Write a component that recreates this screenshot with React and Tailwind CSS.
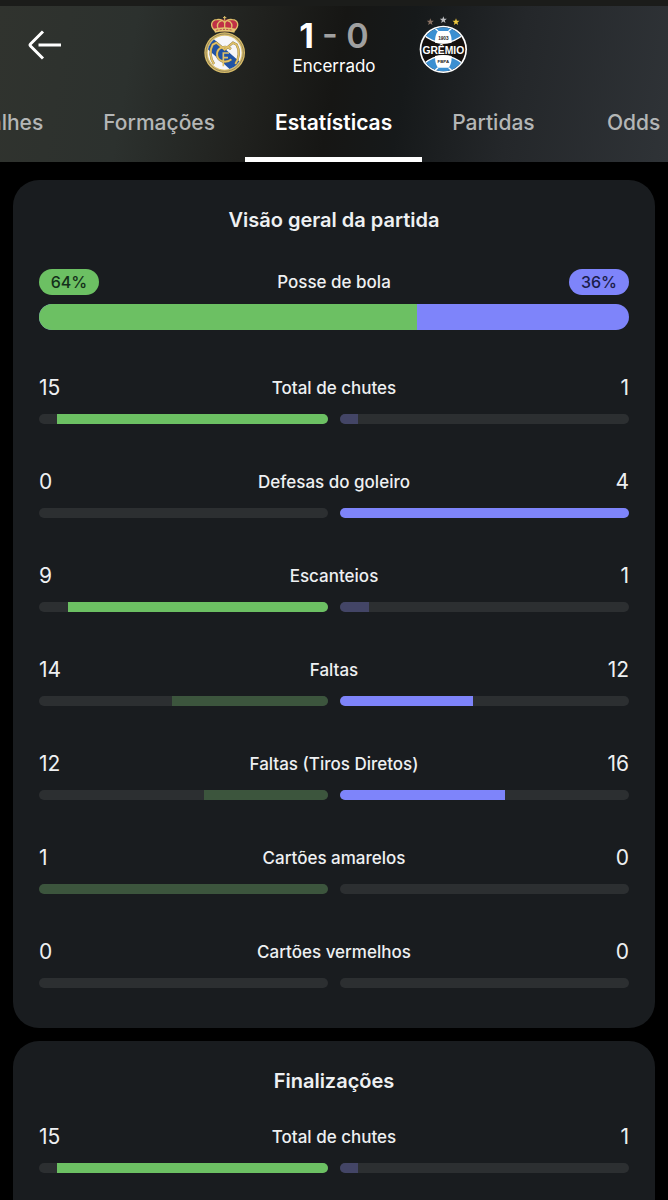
import React, { useEffect, useRef, useState } from 'react';

const TABS = ['Detalhes', 'Formações', 'Estatísticas', 'Partidas', 'Odds'];

const OVERVIEW = [
  { label: 'Total de chutes', home: 15, away: 1 },
  { label: 'Defesas do goleiro', home: 0, away: 4 },
  { label: 'Escanteios', home: 9, away: 1 },
  { label: 'Faltas', home: 14, away: 12, lowerWins: true },
  { label: 'Faltas (Tiros Diretos)', home: 12, away: 16 },
  { label: 'Cartões amarelos', home: 1, away: 0, lowerWins: true },
  { label: 'Cartões vermelhos', home: 0, away: 0, lowerWins: true },
];

const SHOTS = [{ label: 'Total de chutes', home: 15, away: 1 }];

const STAR = 'M0 -11 L2.8 -3.6 L10.5 -3.4 L4.4 1.4 L6.5 9 L0 4.6 L-6.5 9 L-4.4 1.4 L-10.5 -3.4 L-2.8 -3.6 Z';

const BackArrow = () => (
  <svg viewBox="0 0 34 30" className="w-[34px] h-[30px]" fill="none" stroke="white" strokeWidth="3" aria-hidden="true">
    <path d="M15 1.5 L2.5 14 Q1.5 15 2.5 16 L15 28.5" />
    <path d="M10.5 15 H33" />
  </svg>
);

const RealMadridCrest = () => (
  <svg viewBox="0 0 171 171" className="w-[57px] h-[57px]" role="img" aria-label="Real Madrid">
    <defs>
      <clipPath id="rm-disc">
        <circle cx="86" cy="110" r="51" />
      </clipPath>
    </defs>
    {/* crown */}
    <path d="M56 46 C46 34 44 22 52 16 C60 9 74 8 86 11 C98 8 112 9 120 16 C128 22 126 34 116 46 Z" fill="#c03047" />
    <g fill="none" stroke="#dfc06a" strokeWidth="4">
      <path d="M57 44 C40 29 46 12 63 11 C75 9 84 15 86 20 C88 15 97 9 109 11 C126 12 132 29 115 44" />
      <path d="M69 42 C59 28 66 16 78 14" />
      <path d="M103 42 C113 28 106 16 94 14" />
      <path d="M86 16 V42" />
    </g>
    <path d="M86 0 V14 M81 5 H91" stroke="#dfc06a" strokeWidth="3" />
    <path d="M53 38 Q86 29 119 38 L115 50 Q86 43 57 50 Z" fill="#e3c673" />
    <path d="M61 43 Q86 37 111 43" fill="none" stroke="#b24345" strokeWidth="3" strokeDasharray="6 4" />
    {/* disc */}
    <circle cx="86" cy="110" r="61" fill="#d9bd68" />
    <circle cx="86" cy="110" r="56" fill="none" stroke="#766d55" strokeWidth="2" />
    <circle cx="86" cy="110" r="51" fill="#f6f6f8" />
    <g clipPath="url(#rm-disc)">
      <path d="M27 92 L52 68 L139 144 L114 171 Z" fill="#2053a5" />
    </g>
    <g fill="none" stroke="#8b7845" strokeWidth="7">
      <path d="M54 144 C42 127 40 104 50 86 L61 80 L86 101 L111 80 L122 86 C132 104 130 127 118 144" />
      <path d="M105 99 C88 86 64 94 63 114 C63 135 88 144 106 130" />
    </g>
    <g fill="none" stroke="#e0c167" strokeWidth="5">
      <path d="M54 144 C42 127 40 104 50 86 L61 80 L86 101 L111 80 L122 86 C132 104 130 127 118 144" />
      <path d="M105 99 C88 86 64 94 63 114 C63 135 88 144 106 130" />
      <path d="M82 151 V111 H99 M82 125 H96" />
    </g>
  </svg>
);

const GremioCrest = () => (
  <svg viewBox="0 0 171 171" className="w-[57px] h-[57px]" role="img" aria-label="Grêmio">
    <defs>
      <clipPath id="gr-disc">
        <circle cx="85" cy="100" r="66" />
      </clipPath>
    </defs>
    <path d={STAR} transform="translate(46 18)" fill="#8a7263" />
    <path d={STAR} transform="translate(85 12)" fill="#bcbdbf" />
    <path d={STAR} transform="translate(123 18)" fill="#efc93f" />
    <circle cx="85" cy="100" r="71" fill="#ffffff" />
    <circle cx="85" cy="100" r="66" fill="#15110f" />
    <g clipPath="url(#gr-disc)">
      <path d="M22 54 Q85 107 148 54 L130 20 H40 Z" fill="#3b8fd1" stroke="#fff" strokeWidth="4" />
      <path d="M22 146 Q85 93 148 146 L130 180 H40 Z" fill="#3b8fd1" stroke="#fff" strokeWidth="4" />
      <path d="M60 80 C60 64 62 55 69 45 H101 C108 55 110 64 110 80 Q85 86 60 80 Z" fill="#fff" />
      <path d="M60 120 C60 136 62 145 69 155 H101 C108 145 110 136 110 120 Q85 114 60 120 Z" fill="#fff" />
      <path d="M69 45 L57 34 M101 45 L113 34 M69 155 L57 166 M101 155 L113 166" stroke="#fff" strokeWidth="4" />
    </g>
    <g textAnchor="middle" className="font-['Liberation_Sans',sans-serif] font-bold">
      <text x="85" y="71" fontSize="14" fill="#222">1903</text>
      <text x="85" y="114" fontSize="31" fill="#fff">GRÊMIO</text>
      <text x="85" y="140" fontSize="13" fill="#222">FBPA</text>
    </g>
  </svg>
);

const Header = () => {
  const [active, setActive] = useState('Estatísticas');
  const stripRef = useRef(null);

  // keep the selected tab in the middle of the strip
  useEffect(() => {
    const strip = stripRef.current;
    const tab = strip.querySelector('[aria-selected="true"]');
    strip.scrollLeft = tab.offsetLeft - (strip.clientWidth - tab.offsetWidth) / 2;
  }, [active]);

  return (
    <header className="relative shrink-0 border-t-[6px] border-[#1b1c1a] bg-[linear-gradient(100deg,#30332e_0%,#2c312e_20%,#20211e_38%,#161614_50%,#16191a_60%,#24272a_76%,#2f3337_100%)]">
      <div className="grid grid-cols-[1fr_auto_1fr] items-start pt-[10px]">
        <button type="button" aria-label="Voltar" className="justify-self-start pl-7 pt-[14px]">
          <BackArrow />
        </button>
        <div className="flex items-start">
          <RealMadridCrest />
          <div className="w-[162px] text-center">
            <div className="text-[34px] leading-[40px] font-bold text-[#a0a0a0]">
              <span className="text-white">1</span> <span className="font-semibold">- 0</span>
            </div>
            <div className="text-[17px] leading-5 text-white">Encerrado</div>
          </div>
          <GremioCrest />
        </div>
      </div>
      <div ref={stripRef} role="tablist" className="flex mt-2 overflow-x-auto [scrollbar-width:none]">
        {TABS.map((tab) => (
          <button
            key={tab}
            type="button"
            role="tab"
            aria-selected={tab === active}
            onClick={() => setActive(tab)}
            className={`shrink-0 min-w-[138px] h-[78px] px-[30px] pt-1 text-[21px] border-b-[5px] ${
              tab === active ? 'font-semibold text-white border-white' : 'font-medium text-[#b4b6b6] border-transparent'
            }`}
          >
            {tab}
          </button>
        ))}
      </div>
    </header>
  );
};

const Possession = ({ home, away }) => (
  <div className="pt-[6px] mb-11">
    <div className="grid grid-cols-[1fr_auto_1fr] items-center h-[26px] text-base font-medium">
      <span className="justify-self-start w-[60px] h-[26px] leading-[26px] rounded-full text-center bg-[#6cc063] text-[#14301a]">{home}%</span>
      <span className="text-[17px] leading-7">Posse de bola</span>
      <span className="justify-self-end w-[60px] h-[26px] leading-[26px] rounded-full text-center bg-[#7e84fa] text-[#1b1d4a]">{away}%</span>
    </div>
    <div className="flex mt-[10px] h-[26px] rounded-full overflow-hidden bg-[#7e84fa]">
      <div className="bg-[#6cc063]" style={{ width: `${home}%` }}></div>
    </div>
  </div>
);

const StatRow = ({ label, home, away, lowerWins }) => {
  const total = home + away || 1;
  const homeWins = lowerWins ? home < away : home > away;
  const awayWins = lowerWins ? away < home : away > home;

  return (
    <div>
      <div className="grid grid-cols-[1fr_auto_1fr] items-center h-7 leading-7">
        <span className="text-[21px]">{home}</span>
        <span className="text-[17px] font-medium">{label}</span>
        <span className="text-[21px] text-right">{away}</span>
      </div>
      <div className="grid grid-cols-2 gap-3 mt-3">
        <div className="flex justify-end h-[10px] rounded-full overflow-hidden bg-[#2c2f31]">
          <div className={homeWins ? 'bg-[#6cc063]' : 'bg-[#3c553d]'} style={{ width: `${(home / total) * 100}%` }}></div>
        </div>
        <div className="flex h-[10px] rounded-full overflow-hidden bg-[#2c2f31]">
          <div className={awayWins ? 'bg-[#7e84fa]' : 'bg-[#434566]'} style={{ width: `${(away / total) * 100}%` }}></div>
        </div>
      </div>
    </div>
  );
};

const StatCard = ({ title, stats, children }) => (
  <section className="rounded-[26px] last:rounded-b-none last:grow bg-[#191c1f] px-[26px] pt-[26px] pb-10">
    <h2 className="mb-7 text-xl leading-7 font-semibold text-center">{title}</h2>
    {children}
    <div className="flex flex-col gap-11">
      {stats.map((stat) => (
        <StatRow key={stat.label} {...stat} />
      ))}
    </div>
  </section>
);

const App = () => {
  return (
    <div className="flex flex-col h-screen bg-black text-[#eef0f2] font-['Inter',sans-serif]">
      <Header />
      <main className="flex-1 min-h-0 overflow-y-auto [scrollbar-width:none] px-[13px] pt-[18px]">
        <div className="flex flex-col gap-[13px] min-h-full">
          <StatCard title="Visão geral da partida" stats={OVERVIEW}>
            <Possession home={64} away={36} />
          </StatCard>
          <StatCard title="Finalizações" stats={SHOTS} />
        </div>
      </main>
    </div>
  );
};

export default App;
